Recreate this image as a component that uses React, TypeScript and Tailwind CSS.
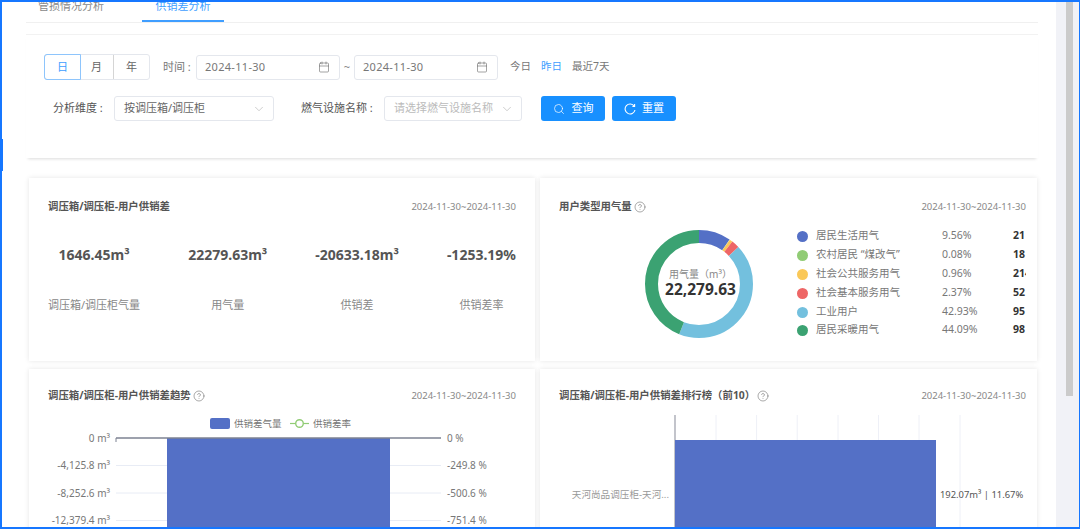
import { Calendar, ChevronDown, CircleHelp, Search } from "lucide-react";

const FONT = "font-['Noto_Sans','Noto_Sans_CJK_SC',sans-serif]";
const BAR = "#5470c6";

const stats = [
  { value: "1646.45m³", label: "调压箱/调压柜气量" },
  { value: "22279.63m³", label: "用气量" },
  { value: "-20633.18m³", label: "供销差" },
  { value: "-1253.19%", label: "供销差率" },
];

const userTypes = [
  { name: "居民生活用气", pct: 9.56, pctText: "9.56%", amount: "21", color: "#5470c6", row: "h-[18px]" },
  { name: "农村居民 “煤改气”", pct: 0.08, pctText: "0.08%", amount: "18", color: "#91cc75", row: "h-[20px]" },
  { name: "社会公共服务用气", pct: 0.96, pctText: "0.96%", amount: "214", color: "#fac858", row: "h-[18px]" },
  { name: "社会基本服务用气", pct: 2.37, pctText: "2.37%", amount: "52", color: "#ee6666", row: "h-[20px]" },
  { name: "工业用户", pct: 42.93, pctText: "42.93%", amount: "95", color: "#73c0de", row: "h-[18px]" },
  { name: "居民采暖用气", pct: 44.09, pctText: "44.09%", amount: "98", color: "#3ba272", row: "h-[18px]" },
];

function DateInput() {
  return (
    <div className="flex h-[25px] w-[144px] items-center justify-between rounded-[3px] border border-[#e4e7ed] pl-[8px] pr-[9px] text-[11px] tracking-[0.3px] text-[#777]">
      <span>2024-11-30</span>
      <Calendar size={12} strokeWidth={1.2} className="text-[#666]" />
    </div>
  );
}

function Field({ text, width, muted }: { text: string; width: string; muted?: boolean }) {
  return (
    <div className={`flex h-[25px] items-center justify-between rounded-[3px] border border-[#e4e7ed] pl-[9px] pr-[7px] text-[11px] ${width} ${muted ? "text-[#bbb]" : "text-[#666]"}`}>
      <span>{text}</span>
      <ChevronDown size={14} strokeWidth={1} className="text-[#aaa]" />
    </div>
  );
}

// reset icon: open ring with a small hook at the top end
function ResetIcon() {
  return (
    <svg width="12" height="12" viewBox="0 0 12 12" fill="none" stroke="currentColor" strokeWidth="1.1">
      <path d="M10.3 3.2A5 5 0 1 0 11 7" />
      <path d="M10.6 1v2.4H8.4" />
    </svg>
  );
}

function Filters() {
  return (
    <div className="h-[124px] border-t border-[#f2f2f2] shadow-[0_3px_3px_-2px_rgba(0,0,0,0.14)]">
      <div className="ml-[18px] mt-[19px] flex h-[26px] items-center text-[11px] text-[#666]">
        <div className="flex h-[26px] w-[106px] rounded-[3px] border border-[#e4e7ed]">
          <div className="-m-px flex w-[37px] items-center justify-center rounded-l-[3px] border border-[#8ec5fc] text-[#409eff]">日</div>
          <div className="flex w-[34px] items-center justify-center border-r border-[#d5d5d5]">月</div>
          <div className="flex flex-1 items-center justify-center">年</div>
        </div>
        <span className="ml-[13px] w-[33px] text-[#777]">时间 :</span>
        <DateInput />
        <span className="w-[14px] text-center text-[#888]">~</span>
        <DateInput />
        <span className="ml-[12px] text-[10.5px] text-[#777]">今日</span>
        <span className="ml-[10px] text-[10.5px] text-[#409eff]">昨日</span>
        <span className="ml-[10px] text-[10.5px] text-[#777]">最近7天</span>
      </div>
      <div className="mt-[16px] flex h-[25px] items-center text-[11px] text-[#555]">
        <span className="ml-[27px] w-[61px]">分析维度 :</span>
        <Field text="按调压箱/调压柜" width="w-[160px]" />
        <span className="ml-[27px] w-[83px]">燃气设施名称 :</span>
        <Field text="请选择燃气设施名称" width="w-[138px]" muted />
        <button className="ml-[19px] flex h-[25px] w-[64px] items-center justify-center gap-[7px] rounded-[3px] bg-[#1890ff] text-white">
          <Search size={12} strokeWidth={1.4} />
          查询
        </button>
        <button className="ml-[7px] flex h-[25px] w-[64px] items-center justify-center gap-[6px] rounded-[3px] bg-[#1890ff] text-white">
          <ResetIcon />
          重置
        </button>
      </div>
    </div>
  );
}

function CardHead({ title, help }: { title: string; help?: boolean }) {
  return (
    <div className="flex h-[16px] items-center justify-between">
      <div className="flex items-center gap-[2px] text-[10.4px] font-bold text-[#555]">
        {title}
        {help && <CircleHelp size={12} strokeWidth={1} className="text-[#555]" />}
      </div>
      <span className="text-[9.5px] text-[#888]">2024-11-30~2024-11-30</span>
    </div>
  );
}

function Donut() {
  const r = 47.5;
  const c = 2 * Math.PI * r;
  let offset = 0;
  return (
    <div className="relative h-[110px] w-[110px]">
      <svg width="110" height="110" viewBox="0 0 110 110" className="-rotate-90">
        {userTypes.map((t) => {
          const len = (t.pct / 100) * c;
          const el = (
            <circle
              key={t.name}
              cx="55"
              cy="55"
              r={r}
              fill="none"
              stroke={t.color}
              strokeWidth="13"
              strokeDasharray={`${len} ${c - len}`}
              strokeDashoffset={-offset}
            />
          );
          offset += len;
          return el;
        })}
      </svg>
      <div className="absolute inset-0 flex flex-col items-center justify-center pb-[2px] pl-[3px]">
        <span className="text-[10px] leading-[12px] text-[#888]">用气量（m³）</span>
        <span className="text-[15.5px] font-bold leading-[19px] text-[#333]">22,279.63</span>
      </div>
    </div>
  );
}

function TrendChart() {
  const left = [
    { y: 21, t: "0 m³" },
    { y: 48.5, t: "-4,125.8 m³" },
    { y: 76, t: "-8,252.6 m³" },
    { y: 103.5, t: "-12,379.4 m³" },
  ];
  const right = ["0 %", "-249.8 %", "-500.6 %", "-751.4 %"];
  return (
    <svg width="506" height="120" viewBox="0 0 506 120" className="mt-[13px] block">
      <rect x="181" y="1" width="20" height="11" rx="2" fill={BAR} />
      <text x="205" y="10" fontSize="9.5" fill="#777">供销差气量</text>
      <line x1="261" x2="280" y1="6.5" y2="6.5" stroke="#91cc75" strokeWidth="1.2" />
      <circle cx="270.5" cy="6.5" r="3.8" fill="#fff" stroke="#91cc75" strokeWidth="1.4" />
      <text x="284" y="10" fontSize="9.5" fill="#777">供销差率</text>
      {left.slice(1).map((l) => (
        <line key={l.t} x1="87" x2="412" y1={l.y} y2={l.y} stroke="#e8ecf5" />
      ))}
      <rect x="138" y="21" width="223" height="99" fill={BAR} />
      <line x1="87" x2="412" y1="21" y2="21" stroke="#7d8292" strokeWidth="1.4" />
      <line x1="87" x2="87" y1="21" y2="25" stroke="#7d8292" />
      {left.map((l, i) => (
        <g key={l.t}>
          <text x="81" y={l.y + 3.5} fontSize="10" fill="#777" textAnchor="end">{l.t}</text>
          <text x="418" y={l.y + 3.5} fontSize="10" fill="#777">{right[i]}</text>
        </g>
      ))}
    </svg>
  );
}

function RankChart() {
  const ticks = [41, 81.6, 122.2, 163, 203.5, 244, 285];
  return (
    <svg width="497" height="120" viewBox="0 0 497 120" className="mt-[6px] block">
      {ticks.map((x) => (
        <line key={x} x1={135 + x} x2={135 + x} y1="5" y2="120" stroke="#eef0f7" />
      ))}
      <line x1="135" x2="135" y1="5" y2="120" stroke="#9a9da8" strokeWidth="1.2" />
      <rect x="135" y="30" width="261" height="90" fill={BAR} />
      <text x="129" y="88" fontSize="9.6" fill="#999" textAnchor="end">天河尚品调压柜-天河...</text>
      <text x="400" y="88" fontSize="9.4" fill="#555">192.07m³ | 11.67%</text>
    </svg>
  );
}

export default function App() {
  return (
    <div className={`flex h-[529px] w-[1080px] overflow-hidden border-y-2 border-l-2 border-r border-[#1677ff] bg-white ${FONT}`}>
      <main className="relative w-[1054px] shrink-0 overflow-hidden pl-[24px] pr-[18px]">
        {/* active menu marker of the cropped sidebar */}
        <div className="absolute left-0 top-[137px] h-[32px] w-[1px] bg-[#1677ff]" />
        <div className="flex h-[21px] items-end border-b border-[#f0f0f0] text-[11px]">
          <div className="relative flex h-[20px] w-[116px] justify-center pr-[26px] text-[#888]">
            <span className="-mt-[3px] leading-[14px]">管损情况分析</span>
          </div>
          <div className="relative flex h-[20px] w-[82px] justify-center border-b-2 border-[#409eff] text-[#409eff]">
            <span className="-mt-[3px] leading-[14px]">供销差分析</span>
          </div>
        </div>
        <div className="mt-[11px]">
          <Filters />
        </div>
        <div className="ml-[3px] mt-[20px] grid w-[1008px] grid-cols-[506px_497px] gap-x-[5px] gap-y-[8px]">
          <section className="h-[183px] bg-white px-[19px] pt-[21px] shadow-[0_0_5px_rgba(0,0,0,0.1)]">
            <CardHead title="调压箱/调压柜-用户供销差" />
            <div className="mt-[28px] flex justify-between">
              {stats.map((s) => (
                <div key={s.label} className="flex flex-col items-center">
                  <span className="h-[24px] text-[14px] font-bold leading-[24px] text-[#555]">{s.value}</span>
                  <span className="mt-[30px] text-[11px] leading-[16px] text-[#888]">{s.label}</span>
                </div>
              ))}
            </div>
          </section>
          <section className="h-[183px] bg-white pl-[19px] pr-[11px] pt-[21px] shadow-[0_0_5px_rgba(0,0,0,0.1)]">
            <CardHead title="用户类型用气量" help />
            <div className="mt-[-1px] flex">
              <div className="ml-[85px] mt-[15px]">
                <Donut />
              </div>
              <div className="ml-[43px] mt-[13px] w-[229px] overflow-hidden text-[10.5px] text-[#777]">
                {userTypes.map((t) => (
                  <div key={t.name} className={`flex items-center whitespace-nowrap ${t.row}`}>
                    <span className="h-[11px] w-[11px] shrink-0 rounded-full" style={{ backgroundColor: t.color }} />
                    <span className="ml-[8px] w-[126px] shrink-0">{t.name}</span>
                    <span className="w-[71px] shrink-0">{t.pctText}</span>
                    <span className="font-bold text-[#333]">{t.amount}</span>
                  </div>
                ))}
              </div>
            </div>
          </section>
          <section className="h-[183px] bg-white pt-[19px] shadow-[0_0_5px_rgba(0,0,0,0.1)]">
            <div className="px-[19px]">
              <CardHead title="调压箱/调压柜-用户供销差趋势" help />
            </div>
            <TrendChart />
          </section>
          <section className="h-[183px] bg-white pt-[19px] shadow-[0_0_5px_rgba(0,0,0,0.1)]">
            <div className="pl-[19px] pr-[11px]">
              <CardHead title="调压箱/调压柜-用户供销差排行榜（前10）" help />
            </div>
            <RankChart />
          </section>
        </div>
      </main>
      <aside className="relative flex-1 bg-[#f1f2f7]">
        <div className="absolute left-[10px] top-0 h-[394px] w-[7px] bg-[#cbcbcb]" />
      </aside>
    </div>
  );
}
